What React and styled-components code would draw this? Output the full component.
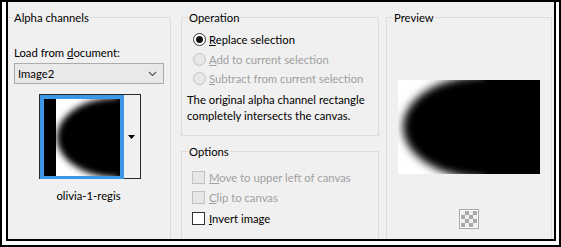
import React from "react";
import styled, { createGlobalStyle } from "styled-components";

const GlobalStyle = createGlobalStyle`
  body {
    margin: 0;
    background: #fff;
    font-family: Lato, "Liberation Sans", sans-serif;
    font-size: 11.3px;
    color: #000;
  }
`;

// screenshot frame: black edge, white gap, then the cropped dialog
const Frame = styled.div`
  box-sizing: border-box;
  width: 561px;
  height: 247px;
  border: 2px solid #000;
  background: #fff;
  padding: 0 3px 4px 4px;
  display: flex;
`;

const Dialog = styled.div`
  flex: 1;
  border: 2px solid #000;
  border-top: 0;
  background: #f0f0f0;
  overflow: hidden;
`;

const Row = styled.div`
  display: flex;
  align-items: flex-start;
  margin-left: -2px;
  padding-top: 8px;
`;

const Column = styled.div`
  display: flex;
  flex-direction: column;
  width: ${(p) => p.$width}px;
  margin-left: ${(p) => p.$offset || 0}px;
`;

const Group = styled.fieldset`
  box-sizing: border-box;
  margin: ${(p) => p.$top || 0}px 0 0 0;
  padding: 0;
  min-width: 0;
  border: 1px solid #dcdcdc;
  height: ${(p) => p.$height}px;
  display: flex;
  flex-direction: column;
`;

const Title = styled.legend`
  margin-left: 6px;
  padding: 0 1px;
  line-height: 15px;
`;

const Label = styled.div`
  margin: ${(p) => p.$top || 0}px 0 0 7px;
  line-height: 15px;
`;

const Combo = styled.div`
  box-sizing: border-box;
  margin: 3px 0 0 7px;
  width: 150px;
  height: 21px;
  border: 1px solid #acacac;
  background: #e9e9e9;
  display: flex;
  align-items: center;
  justify-content: space-between;
  padding: 0 6px 0 3px;
`;

const ThumbWidget = styled.div`
  align-self: center;
  margin: 10px 0 0 2px;
  display: flex;
  border-top: 1px solid #2a2a2a;
  border-left: 1px solid #2a2a2a;
`;

const ThumbFrame = styled.div`
  border: 4px solid #3d97e6;
  border-bottom-width: 3px;
  display: flex;
  background: #fff;
`;

const DropButton = styled.div`
  width: 16px;
  border-right: 1px solid #2a2a2a;
  border-bottom: 1px solid #2a2a2a;
  background: #f0f0f0;
  display: flex;
  align-items: center;
  justify-content: center;
`;

const Caption = styled.div`
  text-align: center;
  margin-top: 9px;
  line-height: 15px;
`;

const Choice = styled.div`
  display: flex;
  align-items: center;
  height: ${(p) => p.$height}px;
  padding-left: ${(p) => p.$indent}px;
  color: ${(p) => (p.$disabled ? "#a0a0a0" : "#000")};
`;

const RadioDot = styled.span`
  box-sizing: border-box;
  width: 13px;
  height: 13px;
  border-radius: 50%;
  border: 1px solid ${(p) => (p.$disabled ? "#c2c2c2" : "#333")};
  background: ${(p) => (p.$disabled ? "#e8e8e8" : "#fff")};
  display: flex;
  align-items: center;
  justify-content: center;
  margin-right: 3px;
  &::after {
    content: "";
    width: 7px;
    height: 7px;
    border-radius: 50%;
    background: #111;
    display: ${(p) => (p.$checked ? "block" : "none")};
  }
`;

const Box = styled.span`
  box-sizing: border-box;
  width: 13px;
  height: 13px;
  border: 1px solid ${(p) => (p.$disabled ? "#c2c2c2" : "#333")};
  background: ${(p) => (p.$disabled ? "#e6e6e6" : "#fff")};
  margin-right: 4px;
`;

const Note = styled.p`
  margin: 3px 0 0 5px;
  line-height: 16px;
`;

const List = styled.div`
  margin-top: ${(p) => p.$top}px;
`;

const PreviewImage = styled.div`
  align-self: center;
  margin-top: 55px;
  display: flex;
  background: #fff;
`;

const AlphaToggle = styled.div`
  align-self: center;
  margin-top: 35px;
  box-sizing: border-box;
  width: 20px;
  height: 20px;
  border: 1px solid #a8a8a8;
  padding: 1px;
  background: #fff;
  &::after {
    content: "";
    display: block;
    width: 16px;
    height: 16px;
    background: repeating-conic-gradient(#a9a9a9 0 25%, #eeeeee 0 50%) 0 0 / 8px 8px;
  }
`;

function Blob({ width, height, cx, rx, ry, blur, strip }) {
  const id = `blur-${width}`;
  return (
    <svg width={width} height={height} viewBox={`0 0 ${width} ${height}`}>
      <defs>
        <filter id={id} x="-50%" y="-50%" width="200%" height="200%">
          <feGaussianBlur stdDeviation={blur} />
        </filter>
      </defs>
      <rect width={width} height={height} fill="#fff" />
      <g filter={`url(#${id})`}>
        <ellipse cx={cx} cy={height / 2} rx={rx} ry={ry} fill="#000" />
        <rect x={cx} y={-40} width={width + 40} height={height + 80} fill="#000" />
      </g>
      {strip ? <rect width={strip} height={height} fill="#000" /> : null}
    </svg>
  );
}

function Chevron() {
  return (
    <svg width="9" height="6" viewBox="0 0 9 6">
      <path d="M1 1 L4.5 4.5 L8 1" fill="none" stroke="#5a5a5a" strokeWidth="1.2" />
    </svg>
  );
}

function Arrow() {
  return (
    <svg width="7" height="4" viewBox="0 0 7 4">
      <path d="M0 0 H7 L3.5 4 Z" fill="#000" />
    </svg>
  );
}

const operations = [
  { key: "R", rest: "eplace selection", checked: true },
  { key: "A", rest: "dd to current selection", disabled: true },
  { key: "S", rest: "ubtract from current selection", disabled: true },
];

const options = [
  { key: "M", rest: "ove to upper left of canvas", disabled: true },
  { key: "C", rest: "lip to canvas", disabled: true },
  { key: "I", rest: "nvert image" },
];

export default function App() {
  return (
    <>
      <GlobalStyle />
      <Frame>
        <Dialog>
          <Row>
            <Column $width={165}>
              <Group $height={245}>
                <Title>Alpha channels</Title>
                <Label $top={20}>
                  Load from <u>d</u>ocument:
                </Label>
                <Combo>
                  <span>Image2</span>
                  <Chevron />
                </Combo>
                <ThumbWidget>
                  <ThumbFrame>
                    <Blob width={76} height={77} cx={73} rx={60} ry={40} blur={3} strip={12} />
                  </ThumbFrame>
                  <DropButton>
                    <Arrow />
                  </DropButton>
                </ThumbWidget>
                <Caption>olivia-1-regis</Caption>
              </Group>
            </Column>

            <Column $width={198} $offset={10}>
              <Group $height={126}>
                <Title>Operation</Title>
                <List $top={5}>
                  {operations.map((o) => (
                    <Choice key={o.key} $height={19.5} $indent={11} $disabled={o.disabled}>
                      <RadioDot $checked={o.checked} $disabled={o.disabled} />
                      <span>
                        <u>{o.key}</u>
                        {o.rest}
                      </span>
                    </Choice>
                  ))}
                </List>
                <Note>
                  The original alpha channel rectangle
                  <br />
                  completely intersects the canvas.
                </Note>
              </Group>
              <Group $top={8} $height={120}>
                <Title>Options</Title>
                <List $top={8}>
                  {options.map((o) => (
                    <Choice key={o.key} $height={20.5} $indent={10} $disabled={o.disabled}>
                      <Box $disabled={o.disabled} />
                      <span>
                        <u>{o.key}</u>
                        {o.rest}
                      </span>
                    </Choice>
                  ))}
                </List>
              </Group>
            </Column>

            <Column $width={166} $offset={7}>
              <Group $height={245}>
                <Title>Preview</Title>
                <PreviewImage>
                  <Blob width={142} height={94} cx={85} rx={80} ry={51} blur={4.5} />
                </PreviewImage>
                <AlphaToggle />
              </Group>
            </Column>
          </Row>
        </Dialog>
      </Frame>
    </>
  );
}
